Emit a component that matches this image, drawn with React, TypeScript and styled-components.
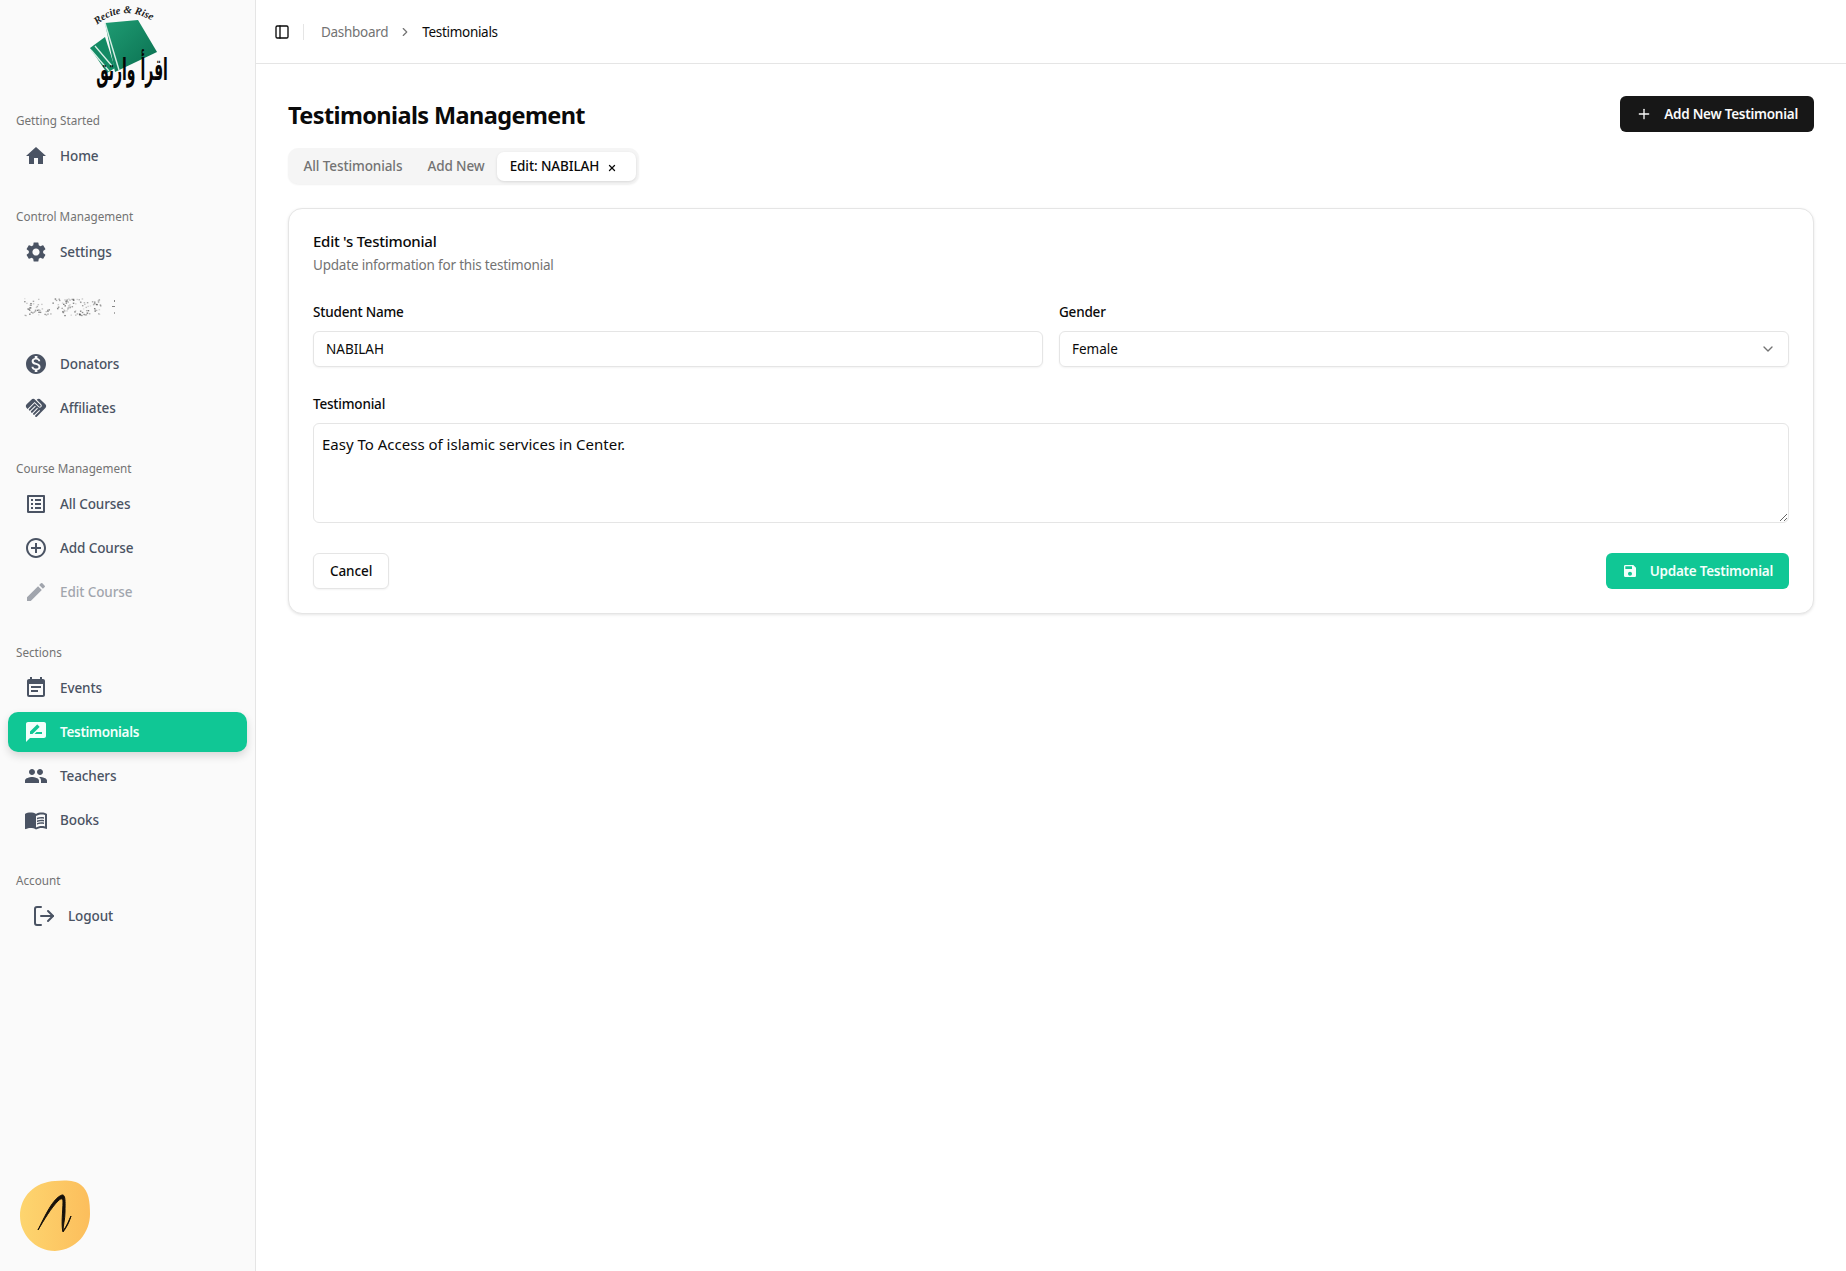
import React from "react";
import styled, { createGlobalStyle } from "styled-components";
import { ChevronDown, ChevronRight, LogOut, PanelLeft, Plus, X } from "lucide-react";
import {
  MdAddCircleOutline,
  MdEdit,
  MdEventNote,
  MdHandshake,
  MdHome,
  MdListAlt,
  MdMenuBook,
  MdMonetizationOn,
  MdPeople,
  MdRateReview,
  MdSave,
  MdSettings,
} from "react-icons/md";

const GlobalStyle = createGlobalStyle`
  * { box-sizing: border-box; }
  html, body { margin: 0; padding: 0; background: #fff; }
  body { font-family: "Noto Sans", "Open Sans", sans-serif; color: #0a0a0a; }
`;

const Logo = () => (
  <LogoSvg viewBox="0 0 110 94" width="110" height="94">
    <defs>
      <linearGradient id="bookGreen" x1="0" y1="0" x2="1" y2="1">
        <stop offset="0" stopColor="#1f9c73" />
        <stop offset="1" stopColor="#0a6f50" />
      </linearGradient>
      <path id="logoArc" d="M24 25 Q52 1 88 26" fill="none" />
    </defs>
    <polygon points="32,23 65,20 84,52 42,72" fill="url(#bookGreen)" />
    <path d="M32 23 L46 70" stroke="#d8efe6" strokeWidth="1.4" />
    <polygon points="17,48 32,37 42,68 34,73" fill="#138a64" />
    <path d="M18 50 L36 71 M22 46 L39 66" stroke="#d8efe6" strokeWidth="1.3" />
    <text fontFamily="Liberation Serif, serif" fontStyle="italic" fontWeight="700" fontSize="10.5" fill="#222">
      <textPath href="#logoArc">Recite &amp; Rise</textPath>
    </text>
    <text
      transform="translate(59 80) scale(1 2.2)"
      textAnchor="middle"
      direction="rtl"
      fontFamily="DejaVu Sans, sans-serif"
      fontWeight="700"
      fontSize="14"
      fill="#050505"
    >
      اقرأ وارتق
    </text>
  </LogoSvg>
);

// the blurred-out menu entry of the reference
const specks = Array.from({ length: 135 }, (_, i) => {
  const a = Math.abs(Math.sin(i * 12.9898) * 43758.5453) % 1;
  const b = Math.abs(Math.sin(i * 78.233) * 24634.6345) % 1;
  const c = Math.abs(Math.sin(i * 39.425) * 9631.127) % 1;
  return { x: a * 76, y: 1 + b * 17, o: 0.15 + c * 0.65 };
});

const Scrambled = () => (
  <svg width="96" height="20" viewBox="0 0 96 20">
    {specks.map((s, i) => (
      <rect key={i} x={s.x} y={s.y} width="1.5" height="1.3" fill="#555" opacity={s.o} />
    ))}
    <rect x="90" y="3" width="1" height="2" fill="#888" />
    <rect x="88" y="9" width="3" height="1" fill="#888" />
    <rect x="90" y="15" width="1" height="2" fill="#aaa" />
  </svg>
);

const Avatar = () => (
  <svg width="72" height="72" viewBox="0 0 72 72">
    <defs>
      <linearGradient id="avatarFill" x1="0" y1="0" x2="1" y2="0">
        <stop offset="0" stopColor="#fdd56f" />
        <stop offset="1" stopColor="#fcbe5c" />
      </linearGradient>
    </defs>
    <path d="M36 1 C46 0 56 0 62 5 C70 11 71 22 71 34 C71 52 58 70 36 71 C16 71 1 54 1 36 C1 16 16 2 36 1 Z" fill="url(#avatarFill)" />
    <path
      d="M19 50 C26 36 34 18 43 15 C47 14 46 24 46 32 C46 39 44 46 44 51 C48 46 50 40 52 36 C50 43 47 48 44 52 C42 45 44 30 44 22 C44 18 42 18 39 21 C32 28 25 40 19 50 Z"
      fill="#15100a"
      stroke="#15100a"
      strokeWidth="1"
    />
  </svg>
);

const NAV = [
  { title: "Getting Started", items: [{ label: "Home", icon: <MdHome size={24} /> }] },
  { title: "Control Management", items: [{ label: "Settings", icon: <MdSettings size={24} /> }] },
  {
    title: "",
    items: [
      { label: "Donators", icon: <MdMonetizationOn size={24} /> },
      { label: "Affiliates", icon: <MdHandshake size={24} /> },
    ],
  },
  {
    title: "Course Management",
    items: [
      { label: "All Courses", icon: <MdListAlt size={24} /> },
      { label: "Add Course", icon: <MdAddCircleOutline size={24} /> },
      { label: "Edit Course", icon: <MdEdit size={24} />, disabled: true },
    ],
  },
  {
    title: "Sections",
    items: [
      { label: "Events", icon: <MdEventNote size={24} /> },
      { label: "Testimonials", icon: <MdRateReview size={24} />, active: true },
      { label: "Teachers", icon: <MdPeople size={24} /> },
      { label: "Books", icon: <MdMenuBook size={24} /> },
    ],
  },
];

export default function App() {
  return (
    <>
      <GlobalStyle />
      <Page>
        <Sidebar>
          <LogoWrap>
            <Logo />
          </LogoWrap>
          {NAV.map((group, idx) => (
            <NavGroup key={idx}>
              {group.title ? <GroupTitle>{group.title}</GroupTitle> : <ScrambledRow><Scrambled /></ScrambledRow>}
              {group.items.map((item: any) => (
                <NavItem key={item.label} $active={item.active} $disabled={item.disabled}>
                  <NavIcon>{item.icon}</NavIcon>
                  {item.label}
                </NavItem>
              ))}
            </NavGroup>
          ))}
          <NavGroup>
            <GroupTitle>Account</GroupTitle>
            <LogoutItem>
              <LogOut size={24} strokeWidth={2} />
              Logout
            </LogoutItem>
          </NavGroup>
          <AvatarWrap>
            <Avatar />
          </AvatarWrap>
        </Sidebar>
        <Main>
          <TopBar>
            <PanelLeft size={16} strokeWidth={2} />
            <TopDivider />
            <Crumb>Dashboard</Crumb>
            <ChevronRight size={14} color="#737373" />
            <CrumbCurrent>Testimonials</CrumbCurrent>
          </TopBar>
          <Content>
            <HeadRow>
              <PageTitle>Testimonials Management</PageTitle>
              <DarkButton>
                <Plus size={16} />
                Add New Testimonial
              </DarkButton>
            </HeadRow>
            <Tabs>
              <Tab>All Testimonials</Tab>
              <Tab>Add New</Tab>
              <Tab $active>
                Edit: NABILAH
                <CloseMark>
                  <X size={10} strokeWidth={3} />
                </CloseMark>
              </Tab>
            </Tabs>
            <Card>
              <CardTitle>Edit 's Testimonial</CardTitle>
              <CardSub>Update information for this testimonial</CardSub>
              <FormGrid>
                <Field>
                  <Label>Student Name</Label>
                  <Input defaultValue="NABILAH" />
                </Field>
                <Field>
                  <Label>Gender</Label>
                  <SelectBox>
                    Female
                    <ChevronDown size={16} color="#737373" />
                  </SelectBox>
                </Field>
              </FormGrid>
              <Field>
                <Label>Testimonial</Label>
                <TextArea defaultValue="Easy To Access of islamic services in Center." />
              </Field>
              <Actions>
                <CancelButton>Cancel</CancelButton>
                <SaveButton>
                  <MdSave size={16} />
                  Update Testimonial
                </SaveButton>
              </Actions>
            </Card>
          </Content>
        </Main>
      </Page>
    </>
  );
}

const Page = styled.div`
  display: flex;
  height: 1271px;
  overflow: hidden;
`;

const Sidebar = styled.aside`
  width: 256px;
  flex-shrink: 0;
  display: flex;
  flex-direction: column;
  background: #fafafa;
  border-right: 1px solid #e5e5e5;
  padding: 0 8px;
`;

const LogoWrap = styled.div`
  height: 94px;
  display: flex;
  justify-content: center;
  margin-bottom: 16px;
`;

const LogoSvg = styled.svg`
  display: block;
`;

const NavGroup = styled.div`
  display: flex;
  flex-direction: column;
  gap: 4px;
  margin-bottom: 30px;
`;

const GroupTitle = styled.div`
  height: 22px;
  padding-left: 8px;
  font-size: 11.7px;
  line-height: 21px;
  color: #737373;
`;

const ScrambledRow = styled.div`
  height: 43px;
  margin-top: -5px;
  padding-left: 16px;
`;

const NavItem = styled.div<{ $active?: boolean; $disabled?: boolean }>`
  height: 40px;
  display: flex;
  align-items: center;
  gap: 12px;
  padding: 0 16px;
  border-radius: 10px;
  font-size: 13.5px;
  font-weight: ${(p) => (p.$active ? 600 : 500)};
  letter-spacing: ${(p) => (p.$active ? "-0.3px" : "-0.1px")};
  color: ${(p) => (p.$active ? "#f2fffb" : "#4a5363")};
  background: ${(p) => (p.$active ? "#10c795" : "transparent")};
  box-shadow: ${(p) => (p.$active ? "0 4px 8px rgba(0, 0, 0, 0.14)" : "none")};
  opacity: ${(p) => (p.$disabled ? 0.5 : 1)};
`;

const NavIcon = styled.span`
  width: 24px;
  height: 24px;
  display: flex;
  align-items: center;
  justify-content: center;
`;

const LogoutItem = styled.div`
  height: 40px;
  display: flex;
  align-items: center;
  gap: 12px;
  padding: 0 24px;
  font-size: 13.5px;
  font-weight: 500;
  letter-spacing: -0.1px;
  color: #4a5363;
`;

const AvatarWrap = styled.div`
  margin-top: auto;
  padding: 0 0 19px 11px;
  line-height: 0;
`;

const Main = styled.main`
  flex: 1;
  min-width: 0;
  display: flex;
  flex-direction: column;
`;

const TopBar = styled.header`
  height: 64px;
  display: flex;
  align-items: center;
  gap: 10px;
  padding: 0 18px;
  border-bottom: 1px solid #e5e5e5;
`;

const TopDivider = styled.span`
  width: 1px;
  height: 16px;
  background: #e5e5e5;
  margin: 0 7px 0 3px;
`;

const Crumb = styled.span`
  font-size: 13.5px;
  letter-spacing: -0.3px;
  color: #737373;
`;

const CrumbCurrent = styled.span`
  font-size: 13.5px;
  letter-spacing: -0.3px;
  color: #0a0a0a;
`;

const Content = styled.div`
  padding: 32px 32px 0;
`;

const HeadRow = styled.div`
  display: flex;
  align-items: center;
  justify-content: space-between;
  height: 36px;
  margin-bottom: 16px;
`;

const PageTitle = styled.h1`
  margin: 1px 0 0;
  font-size: 23.5px;
  font-weight: 700;
  letter-spacing: -0.6px;
`;

const DarkButton = styled.button`
  height: 36px;
  display: flex;
  align-items: center;
  gap: 12px;
  padding: 0 16px;
  border: 0;
  border-radius: 6px;
  background: #171717;
  color: #fafafa;
  font: 600 13.5px "Noto Sans", sans-serif;
  letter-spacing: -0.25px;
`;

const Tabs = styled.div`
  display: inline-flex;
  align-items: center;
  height: 36px;
  padding: 3px;
  gap: 0;
  border-radius: 10px;
  background: #f5f5f5;
  box-shadow: 0 1px 2px rgba(0, 0, 0, 0.06);
`;

const Tab = styled.div<{ $active?: boolean }>`
  height: 29px;
  display: flex;
  align-items: center;
  padding: 0 12.5px;
  border-radius: 7px;
  font-size: 13.5px;
  font-weight: 500;
  letter-spacing: -0.1px;
  color: ${(p) => (p.$active ? "#0a0a0a" : "#737373")};
  background: ${(p) => (p.$active ? "#fff" : "transparent")};
  box-shadow: ${(p) => (p.$active ? "0 1px 3px rgba(0, 0, 0, 0.12)" : "none")};
`;

const CloseMark = styled.span`
  display: flex;
  margin: 3px 6px 0 8px;
`;

const Card = styled.section`
  margin-top: 24px;
  padding: 22px 24px 24px;
  border: 1px solid #e5e5e5;
  border-radius: 14px;
  background: #fff;
  box-shadow: 0 1px 3px rgba(0, 0, 0, 0.1);
`;

const CardTitle = styled.div`
  font-size: 15px;
  font-weight: 500;
  letter-spacing: -0.25px;
  line-height: 20px;
`;

const CardSub = styled.div`
  margin-top: 4px;
  font-size: 13.5px;
  letter-spacing: -0.2px;
  line-height: 20px;
  color: #737373;
`;

const FormGrid = styled.div`
  display: grid;
  grid-template-columns: 1fr 1fr;
  gap: 16px;
  margin: 30px 0;
`;

const Field = styled.div`
  display: flex;
  flex-direction: column;
  gap: 12px;
`;

const Label = styled.label`
  font-size: 13.5px;
  font-weight: 500;
  letter-spacing: -0.2px;
  line-height: 14px;
`;

const Input = styled.input`
  height: 36px;
  width: 100%;
  padding: 0 12px;
  border: 1px solid #e5e5e5;
  border-radius: 6px;
  outline: 0;
  font: 400 13.5px "Noto Sans", sans-serif;
  color: #0a0a0a;
  box-shadow: 0 1px 2px rgba(0, 0, 0, 0.05);
`;

const SelectBox = styled.div`
  height: 36px;
  display: flex;
  align-items: center;
  justify-content: space-between;
  padding: 0 12px;
  border: 1px solid #e5e5e5;
  border-radius: 6px;
  font-size: 13.5px;
  box-shadow: 0 1px 2px rgba(0, 0, 0, 0.05);
`;

const TextArea = styled.textarea`
  display: block;
  width: 100%;
  height: 100px;
  padding: 10px 8px;
  border: 1px solid #e5e5e5;
  border-radius: 6px;
  outline: 0;
  font: 400 15px "Noto Sans", sans-serif;
  color: #0a0a0a;
`;

const Actions = styled.div`
  display: flex;
  justify-content: space-between;
  margin-top: 30px;
`;

const CancelButton = styled.button`
  height: 36px;
  padding: 0 16px;
  border: 1px solid #e5e5e5;
  border-radius: 6px;
  background: #fff;
  color: #0a0a0a;
  font: 500 13.5px "Noto Sans", sans-serif;
  letter-spacing: -0.1px;
  box-shadow: 0 1px 2px rgba(0, 0, 0, 0.05);
`;

const SaveButton = styled.button`
  height: 36px;
  display: flex;
  align-items: center;
  gap: 12px;
  padding: 0 16px;
  border: 0;
  border-radius: 6px;
  background: #10c795;
  color: #f2fffb;
  font: 600 13.5px "Noto Sans", sans-serif;
  letter-spacing: -0.25px;
`;
